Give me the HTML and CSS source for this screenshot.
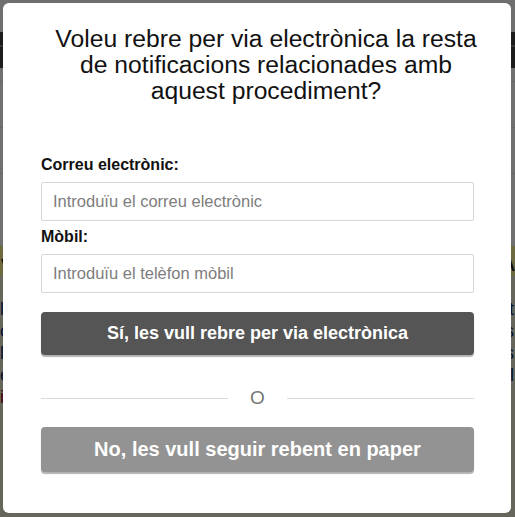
FILE: index.html
```html
<!DOCTYPE html>
<html lang="ca">
<head>
<meta charset="utf-8">
<title>Notificacions</title>
<link rel="stylesheet" href="styles.css">
</head>
<body>
<div class="page">
  <div class="top-strip"></div>
  <div class="header-band"><div class="header-line"></div></div>
  <div class="nav-area">
    <div class="rule"></div>
    <div class="rule"></div>
    <div class="rule"></div>
  </div>
  <div class="notice-band"><span>V</span><span>A</span></div>
  <div class="content">
    <div class="row"><span class="blue">l</span><span class="blue">t</span></div>
    <div class="row"><span class="blue">c</span><span class="blue">s</span></div>
    <div class="row"><span class="blue">l</span><span class="blue">s</span></div>
    <div class="row"><span class="blue">e</span><span class="blue">l</span></div>
    <div class="row"><span class="red">i</span><span class="red"></span></div>
  </div>
</div>

<div class="overlay"></div>

<div class="modal" role="dialog">
  <h1 class="modal-title">Voleu rebre per via electrònica la resta de notificacions relacionades amb aquest procediment?</h1>
  <form class="form">
    <label class="label" for="email">Correu electrònic:</label>
    <input class="input" id="email" type="text" placeholder="Introduïu el correu electrònic">
    <label class="label" for="mobile">Mòbil:</label>
    <input class="input" id="mobile" type="text" placeholder="Introduïu el telèfon mòbil">
    <button type="button" class="btn btn-yes">Sí, les vull rebre per via electrònica</button>
    <div class="divider"><span class="divider-line"></span><span class="divider-text">O</span><span class="divider-line"></span></div>
    <button type="button" class="btn btn-no">No, les vull seguir rebent en paper</button>
  </form>
</div>
</body>
</html>
```

FILE: styles.css
```css
html, body {
  margin: 0;
  padding: 0;
  height: 100%;
  overflow: hidden;
}
body {
  font-family: "Liberation Sans", Arial, sans-serif;
  background: #cecdb8;
}
.page {
  display: flex;
  flex-direction: column;
}
.top-strip {
  height: 32px;
  background: #dedede;
}
.header-band {
  height: 36px;
  background: #383838;
  display: flex;
  flex-direction: column;
  padding-top: 13px;
  box-sizing: border-box;
}
.header-line {
  height: 2px;
  background: #6a6a6a;
}
.nav-area {
  height: 178px;
  background: #e0e0e0;
  display: flex;
  flex-direction: column;
  padding-top: 13px;
  gap: 45px;
  box-sizing: border-box;
}
.rule {
  height: 1px;
  background: #cfcfcf;
}
.notice-band {
  height: 30px;
  background: #dcd480;
  color: #222;
  font-size: 16px;
  line-height: 40px;
  font-weight: bold;
  display: flex;
  justify-content: space-between;
  padding: 0 0 0 1px;
}
.content {
  padding: 22px 0 0 0;
  display: flex;
  flex-direction: column;
}
.row {
  display: flex;
  justify-content: space-between;
  font-size: 18px;
  line-height: 22px;
  padding-right: 1px;
}
.blue { color: #0b2a66; }
.red { color: #7a0010; }

.overlay {
  position: fixed;
  inset: 0;
  background: rgba(0, 0, 0, 0.5);
}

.modal {
  position: fixed;
  top: 3px;
  left: 3px;
  width: 508px;
  height: 510px;
  box-sizing: border-box;
  background: #fff;
  border-radius: 6px;
  padding: 23px 37px 0 38px;
  display: flex;
  flex-direction: column;
}
.modal-title {
  margin: 0 -12px 0 5px;
  font-size: 24.7px;
  line-height: 26px;
  font-weight: normal;
  text-align: center;
  color: #111;
}
.form {
  display: flex;
  flex-direction: column;
  margin-top: 51px;
}
.label {
  font-size: 16px;
  line-height: 20px;
  font-weight: bold;
  color: #111;
}
.input {
  margin-top: 7px;
  margin-bottom: 6px;
  height: 39px;
  box-sizing: border-box;
  border: 1px solid #d6d6d6;
  border-radius: 2px;
  padding: 0 11px;
  font-family: "Liberation Sans", Arial, sans-serif;
  font-size: 16.5px;
  color: #333;
}
.input::placeholder {
  color: #7d7d7d;
}
.btn {
  font-family: "Liberation Sans", Arial, sans-serif;
  font-weight: bold;
  color: #fff;
  border: none;
  border-radius: 4px;
  box-shadow: 0 2px 1px rgba(0, 0, 0, 0.3);
  padding: 0;
}
.btn-yes {
  margin-top: 13px;
  height: 43px;
  background: #555;
  font-size: 18px;
}
.btn-no {
  height: 45px;
  background: #939393;
  font-size: 20px;
}
.divider {
  display: flex;
  align-items: center;
  height: 72px;
  padding-top: 14px;
  box-sizing: border-box;
}
.divider-line {
  flex: 1;
  height: 1px;
  background: #dadada;
}
.divider-text {
  margin: 0 22px;
  font-size: 19px;
  color: #777;
}
```
